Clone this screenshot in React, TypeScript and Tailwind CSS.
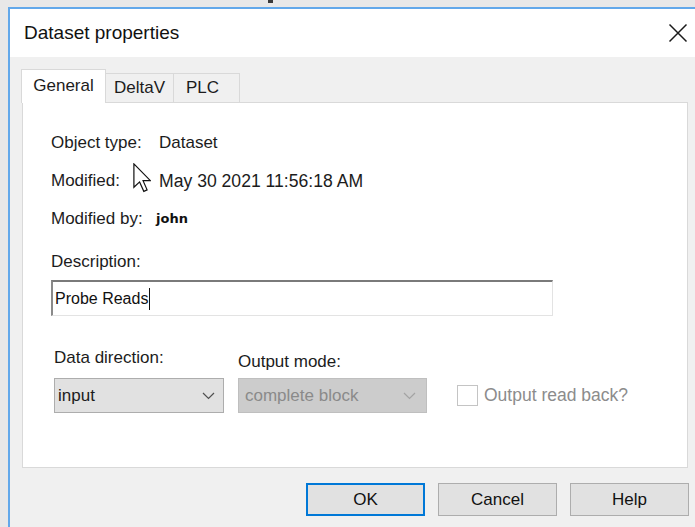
import React from "react"

const labelCls = "w-[108px] shrink-0"

// Arrow pointer sitting over the "Modified" row
const Pointer = () => (
  <svg width="18" height="30" viewBox="0 0 12 20" className="absolute left-[110px] top-[60px]">
    <path
      d="M0.6 0.6 L0.6 16.2 L4.4 12.6 L7.2 18.9 L9.4 17.9 L6.7 11.8 L11.6 11.8 Z"
      fill="#fff"
      stroke="#111"
      strokeWidth="0.8"
      strokeLinejoin="miter"
    />
  </svg>
)

const Chevron = ({ color }: { color: string }) => (
  <svg width="13" height="8" viewBox="0 0 13 8">
    <path d="M1 1 L6.5 6.5 L12 1" fill="none" stroke={color} strokeWidth="1.2" />
  </svg>
)

export default function App() {
  return (
    <div className="w-[695px] h-[527px] overflow-hidden bg-[#e8e8e8] font-['Liberation_Sans',Arial,sans-serif] text-[17px] text-[#1c1c1c]">
      <div className="h-[7px] pl-[268px]">
        <div className="w-[5px] h-[3px] bg-[#3a3a3a]" />
      </div>

      <div className="ml-[8px] h-[520px] flex flex-col border-l-2 border-t-2 border-[#62a8ea] bg-[#f0f0f0]">
        {/* title bar */}
        <div className="h-[48px] shrink-0 bg-white flex items-center justify-between pl-[14px] pr-[7px]">
          <span className="text-[19px] text-[#111]">Dataset properties</span>
          <svg width="20" height="20" viewBox="0 0 20 20">
            <path d="M1.5 1.5 L18.5 18.5 M18.5 1.5 L1.5 18.5" stroke="#1a1a1a" strokeWidth="1.5" />
          </svg>
        </div>

        <div className="flex flex-col pt-[12px]">
          {/* tabs */}
          <div className="relative z-10 -mb-px flex items-end pl-[11px] h-[34px]">
            <div className="h-[34px] w-[85px] bg-white border border-b-0 border-[#d9d9d9] flex items-center justify-center pb-[2px]">
              General
            </div>
            <div className="h-[30px] w-[68px] bg-[#f0f0f0] border border-l-0 border-[#d9d9d9] flex items-center justify-center">
              DeltaV
            </div>
            <div className="h-[30px] w-[66px] bg-[#f0f0f0] border border-l-0 border-[#d9d9d9] flex items-center pl-[12px]">
              PLC
            </div>
          </div>

          {/* panel */}
          <div className="relative ml-[12px] mr-[7px] h-[366px] bg-white border border-[#d9d9d9] pl-[28px] pt-[21px]">
            <Pointer />
            <div className="h-[38px] flex items-center">
              <span className={labelCls}>Object type:</span>
              <span>Dataset</span>
            </div>
            <div className="h-[38px] flex items-center">
              <span className={labelCls}>Modified:</span>
              <span className="text-[17.6px]">May 30 2021 11:56:18 AM</span>
            </div>
            <div className="h-[38px] flex items-center">
              <span className="w-[105px] shrink-0">Modified by:</span>
              <span className="font-['DejaVu_Sans',sans-serif] font-bold text-[13px] text-[#111]">john</span>
            </div>

            <div className="mt-[12px] h-[24px] flex items-center">Description:</div>
            <div className="mt-[6px] w-[502px] h-[36px] flex items-center border-t-2 border-l-2 border-r border-b border-t-[#7a7a7a] border-l-[#8a8a8a] border-r-[#e3e3e3] border-b-[#e3e3e3] pl-[2px] text-[16px] text-[#111]">
              Probe Reads
              <span className="ml-px w-px h-[22px] bg-[#111]" />
            </div>

            <div className="mt-[30px] flex items-start">
              <div className="ml-[3px] w-[170px] flex flex-col">
                <div className="h-[24px] flex items-center">Data direction:</div>
                <div className="mt-[8px] h-[35px] bg-[#e1e1e1] border border-[#adadad] flex items-center justify-between pl-[3px] pr-[8px]">
                  <span>input</span>
                  <Chevron color="#505050" />
                </div>
              </div>
              <div className="ml-[14px] w-[189px] flex flex-col">
                <div className="h-[24px] pt-[8px] flex items-center">Output mode:</div>
                <div className="mt-[8px] h-[35px] bg-[#cccccc] border border-[#bfbfbf] flex items-center justify-between pl-[6px] pr-[10px] text-[#8a8a8a]">
                  <span>complete block</span>
                  <Chevron color="#a3a3a3" />
                </div>
              </div>
              <div className="ml-[30px] mt-[32px] h-[35px] flex items-center gap-[6px] text-[#8c8c8c]">
                <div className="w-[21px] h-[21px] border border-[#c4c4c4] bg-white" />
                <span className="text-[17.5px]">Output read back?</span>
              </div>
            </div>
          </div>

          {/* buttons */}
          <div className="mt-[15px] mr-[6px] flex justify-end gap-[13px]">
            <button className="w-[119px] h-[33px] bg-[#e1e1e1] border-2 border-[#0078d7] text-[#111]">OK</button>
            <button className="w-[119px] h-[33px] bg-[#e1e1e1] border border-[#adadad] text-[#111]">Cancel</button>
            <button className="w-[119px] h-[33px] bg-[#e1e1e1] border border-[#adadad] text-[#111]">Help</button>
          </div>
        </div>
      </div>
    </div>
  )
}
